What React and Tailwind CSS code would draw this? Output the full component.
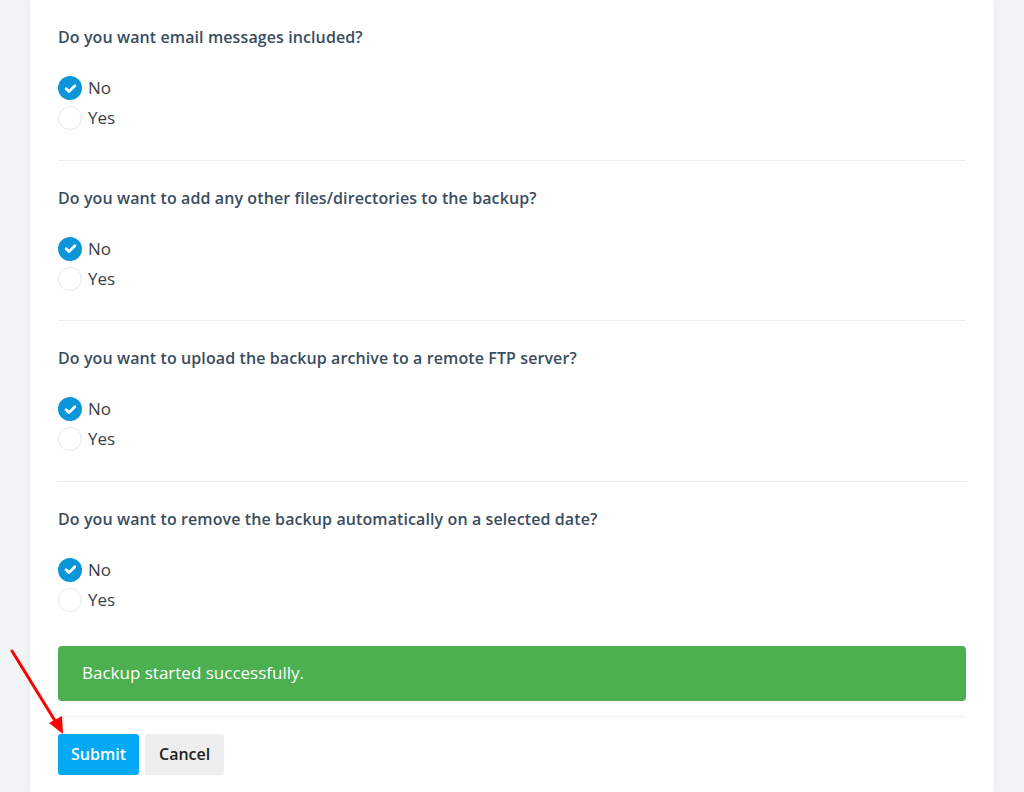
import React from 'react';

const questions = [
  'Do you want email messages included?',
  'Do you want to add any other files/directories to the backup?',
  'Do you want to upload the backup archive to a remote FTP server?',
  'Do you want to remove the backup automatically on a selected date?',
];

const Radio = ({ checked, label }) => (
  <label className="flex items-center h-[30px] cursor-pointer">
    {checked ? (
      <span className="w-[24px] h-[24px] rounded-full bg-[#0b96d9] flex items-center justify-center">
        <svg width="15" height="15" viewBox="0 0 24 24" fill="none" stroke="#fff" strokeWidth="4.5" strokeLinecap="round" strokeLinejoin="round">
          <path d="M5 12.5l4.5 4.5L19 7.5" />
        </svg>
      </span>
    ) : (
      <span className="w-[24px] h-[24px] rounded-full bg-white border border-[#e3e9ec]" />
    )}
    <span className="ml-[6px] text-[17px] text-[#3a3f44]">{label}</span>
  </label>
);

export default function App() {
  return (
    <div className="relative min-h-[792px] bg-[#f2f5f6] px-[30px] font-['Open_Sans',sans-serif]">
      <div className="bg-white min-h-[792px] shadow-[0_0_6px_rgba(0,0,0,0.06)] px-[28px]">
        {questions.map((q, i) => (
          <div
            key={q}
            className={`pt-[26px] ${i < questions.length - 1 ? 'pb-[26.5px] border-b border-[#e9edef]' : 'pb-[31px]'}`}
          >
            <p className="text-[16px] leading-[22px] font-semibold text-[#3a4d5f] tracking-[0.1px]">{q}</p>
            <div className="mt-[25px] flex flex-col">
              <Radio checked label="No" />
              <Radio label="Yes" />
            </div>
          </div>
        ))}

        <div className="h-[55px] rounded-[4px] bg-[#4caf50] flex items-center px-[24px] text-[17px] text-white">
          Backup started successfully.
        </div>

        <div className="mt-[15px] border-t border-[#eceff1] pt-[17px] flex gap-[6px]">
          <button className="h-[41px] px-[13px] rounded-[3px] bg-[#03a9f4] text-white text-[16px] font-semibold">
            Submit
          </button>
          <button className="h-[41px] px-[14px] rounded-[3px] bg-[#eeeeee] text-[#222] text-[16px] font-semibold">
            Cancel
          </button>
        </div>
      </div>

      <svg className="absolute left-0 top-[640px] pointer-events-none" width="80" height="110" viewBox="0 0 80 110">
        <line x1="12" y1="11" x2="57" y2="84" stroke="#ff0000" strokeWidth="3" strokeLinecap="round" />
        <path d="M63 94 L49 83 L62 76 Z" fill="#ff0000" />
      </svg>
    </div>
  );
}
